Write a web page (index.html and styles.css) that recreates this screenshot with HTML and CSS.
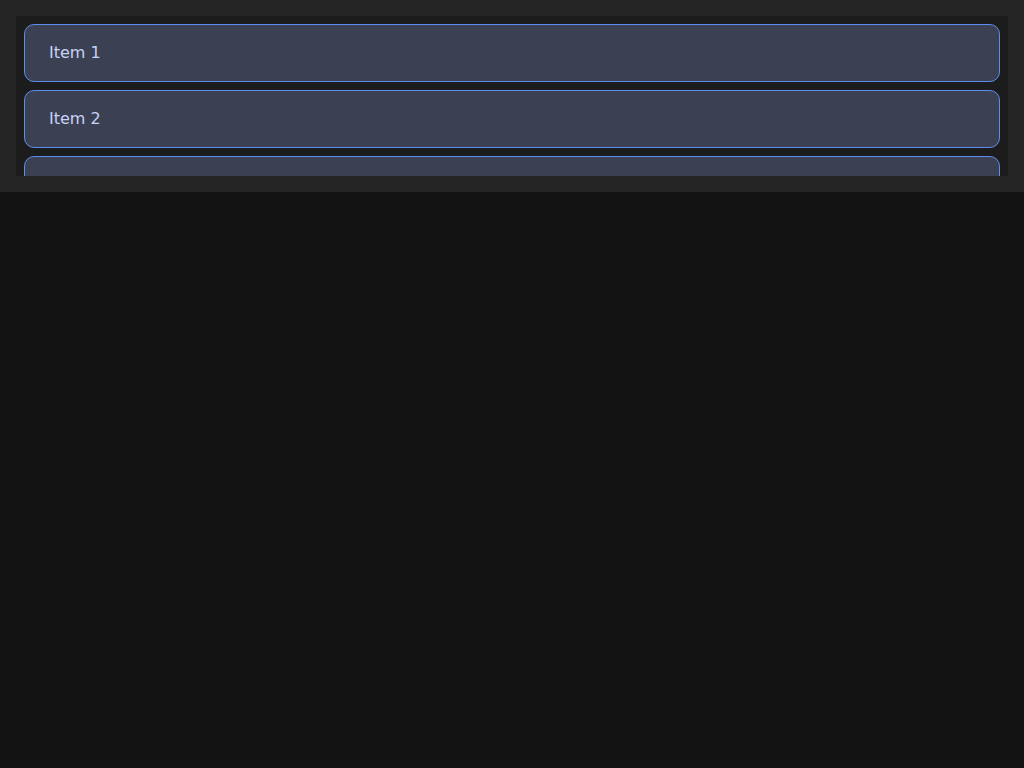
FILE: index.html
```html
<!DOCTYPE html>
<html>
<head>
<meta charset="utf-8">
<link rel="stylesheet" href="styles.css">
</head>
<body>
<div class="panel">
  <div class="list">
    <div class="item">Item 1</div>
    <div class="item">Item 2</div>
    <div class="item">Item 3</div>
  </div>
</div>
</body>
</html>
```
FILE: styles.css
```css
html, body {
  margin: 0;
  padding: 0;
  background: #131313;
  font-family: "DejaVu Sans", sans-serif;
}
.panel {
  background: #252525;
  padding: 16px;
}
.list {
  background: #1c1c1c;
  height: 160px;
  box-sizing: border-box;
  padding: 8px;
  overflow: hidden;
  display: flex;
  flex-direction: column;
  gap: 8px;
}
.item {
  flex: none;
  box-sizing: border-box;
  height: 58px;
  border: 1px solid #5b8def;
  border-radius: 10px;
  background: #3b4053;
  color: #c8d2f6;
  font-size: 16px;
  padding: 0 24px 2px;
  display: flex;
  align-items: center;
}
```
